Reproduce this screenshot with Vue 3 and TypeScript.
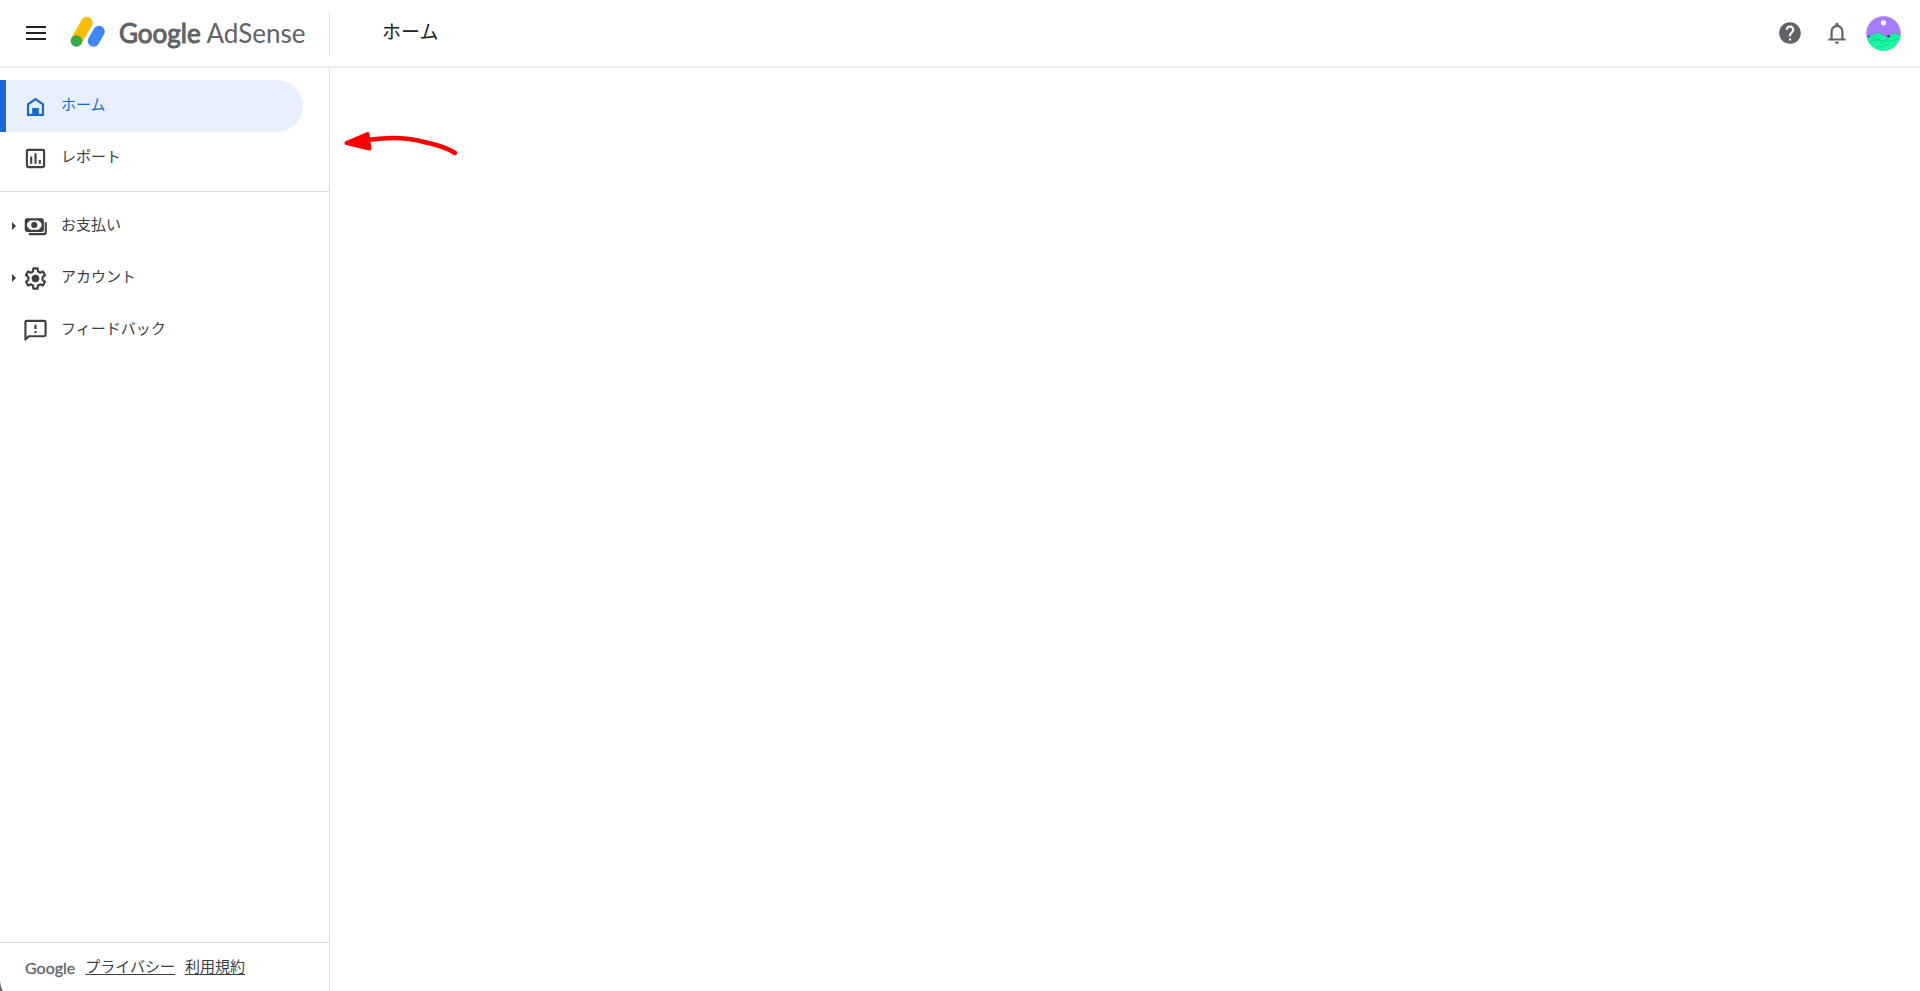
<script setup lang="ts">
type IconName = 'home' | 'report' | 'payments' | 'gear' | 'feedback'

interface NavItem {
  label: string
  icon: IconName
  active?: boolean
  expandable?: boolean
}

const groups: NavItem[][] = [
  [
    { label: 'ホーム', icon: 'home', active: true },
    { label: 'レポート', icon: 'report' },
  ],
  [
    { label: 'お支払い', icon: 'payments', expandable: true },
    { label: 'アカウント', icon: 'gear', expandable: true },
    { label: 'フィードバック', icon: 'feedback' },
  ],
]
</script>

<template>
  <div class="app">
    <header class="topbar">
      <div class="brand">
        <button class="icon-btn" type="button" aria-label="メニュー">
          <svg width="20" height="14" viewBox="0 0 20 14"><path d="M0 1h20M0 7h20M0 13h20" stroke="#202124" stroke-width="2" /></svg>
        </button>
        <a class="logo" href="#">
          <svg width="36" height="32" viewBox="0 0 36 32" fill="none" stroke-linecap="round">
            <path d="M17 5.500 6.500 23.500" stroke="#fbbc04" stroke-width="11.500" />
            <path d="M29 14.500 23.500 24" stroke="#4285f4" stroke-width="11.500" />
            <circle cx="6.500" cy="24" r="5.800" fill="#34a853" />
          </svg>
          <span class="wordmark"><span class="google">Google</span> AdSense</span>
        </a>
      </div>
      <h1 class="title">ホーム</h1>
      <div class="actions">
        <button class="icon-btn action" type="button" aria-label="ヘルプ">
          <svg width="26" height="26" viewBox="0 0 24 24" fill="#5f6368"><path d="M12 2C6.480 2 2 6.480 2 12s4.480 10 10 10 10-4.480 10-10S17.520 2 12 2zm1 17h-2v-2h2v2zm2.070-7.750-.9.920C13.450 12.900 13 13.500 13 15h-2v-.5c0-1.100.45-2.100 1.170-2.830l1.240-1.260c.37-.36.59-.86.59-1.410 0-1.100-.9-2-2-2s-2 .9-2 2H8c0-2.210 1.790-4 4-4s4 1.790 4 4c0 .88-.36 1.680-.93 2.250z" /></svg>
        </button>
        <button class="icon-btn action" type="button" aria-label="通知">
          <svg width="26" height="26" viewBox="0 0 24 24" fill="#5f6368"><path d="M12 22c1.100 0 2-.9 2-2h-4c0 1.100.9 2 2 2zm6-5v-6c0-3.070-1.630-5.640-4.500-6.320V4c0-.83-.67-1.500-1.500-1.500s-1.500.67-1.500 1.500v.68C7.640 5.360 6 7.920 6 11v6H4v2h16v-2h-2zm-2 0H8v-6c0-2.480 1.510-4.500 4-4.500s4 2.020 4 4.500v6z" /></svg>
        </button>
        <button class="icon-btn action" type="button" aria-label="アカウント">
          <svg width="35" height="35" viewBox="0 0 35 35">
            <defs><clipPath id="face"><circle cx="17.500" cy="17.500" r="17.300" /></clipPath></defs>
            <g clip-path="url(#face)">
              <rect width="35" height="35" fill="#a67cff" />
              <path d="M0 21 4 20 12 16.500 17 19 21 21 28 17 35 19V35H0Z" fill="#1df7a3" />
              <path d="M0 21 4 20 12 16.500 17 19 21 21 28 17 35 19" fill="none" stroke="#4b8f9c" stroke-width=".6" />
              <circle cx="17.500" cy="6.800" r="2.600" fill="#fff" />
              <path d="M4 23q6-5 9-3M3 27q5-4 9-3t7 1M14 28q5-4 11-3M20 24q4-4 9-4M7 22q7 1 11 5M10 31q7 1 13-3M25 25q5-2 8-2" fill="none" stroke="#12c98a" stroke-width=".7" />
              <circle cx="3" cy="20.500" r="1" fill="#303050" /><circle cx="22.500" cy="20.200" r="1.200" fill="#303050" />
            </g>
          </svg>
        </button>
      </div>
    </header>

    <div class="body">
      <aside class="sidebar">
        <nav>
          <ul v-for="(group, g) in groups" :key="g" class="group">
            <li v-for="item in group" :key="item.label">
              <a href="#" class="item" :class="{ active: item.active }">
                <span class="caret-slot"><span v-if="item.expandable" class="caret" /></span>
                <svg v-if="item.icon === 'home'" class="icon" viewBox="0 0 24 24">
                  <path d="M4.200 20.800V9.800L12 4.300l7.800 5.500v11z" fill="none" stroke="currentColor" stroke-width="2.300" /><path d="M8.500 13.500h7V21h-7z" fill="currentColor" />
                </svg>
                <svg v-else-if="item.icon === 'report'" class="icon" viewBox="0 0 24 24" fill="none" stroke="currentColor" stroke-width="2.200">
                  <rect x="3" y="3" width="18" height="18" rx="1.500" /><path d="M7.500 10v7.500M12 6.500v11M16.500 13.500v4" />
                </svg>
                <svg v-else-if="item.icon === 'payments'" class="icon" viewBox="0 0 24 24" fill="none" stroke="currentColor">
                  <rect x="2" y="4.500" width="17.500" height="12" rx="1.500" stroke-width="2.400" />
                  <path d="M2 4.500h5L2 9.500ZM19.500 4.500h-5l5 5ZM2 16.500h5l-5-5ZM19.500 16.500h-5l5-5Z" fill="currentColor" />
                  <circle cx="10.700" cy="10.500" r="3.200" fill="currentColor" stroke="none" />
                  <path d="M22.700 7.500v10.500a2 2 0 0 1-2 2H5" stroke-width="2.200" />
                </svg>
                <svg v-else-if="item.icon === 'gear'" class="icon" viewBox="0 0 24 24">
                  <path d="M9.800 1.500h4.400l.5 3.200 2 1.200 3-1.200 2.200 3.800-2.500 2v2.900l2.500 2-2.200 3.900-3-1.200-2 1.200-.5 3.200H9.800l-.5-3.200-2-1.200-3 1.200-2.200-3.900 2.500-2v-2.900l-2.500-2 2.200-3.800 3 1.200 2-1.200z" fill="none" stroke="currentColor" stroke-width="2.300" stroke-linejoin="round" /><circle cx="12" cy="12" r="4" fill="currentColor" />
                </svg>
                <svg v-else class="icon" viewBox="0 0 24 24">
                  <path d="M1.500 21.500V3.500a1.500 1.500 0 0 1 1.500-1.500h18A1.500 1.500 0 0 1 22.500 3.500v13a1.500 1.500 0 0 1-1.500 1.500H5z" fill="none" stroke="currentColor" stroke-width="2.200" stroke-linejoin="round" /><path d="M12 6v4.500M12 12.500v2.300" stroke="currentColor" stroke-width="2.200" />
                </svg>
                <span class="label">{{ item.label }}</span>
              </a>
            </li>
          </ul>
        </nav>
        <footer class="footer">
          <span class="footer-logo">Google</span>
          <a href="#">プライバシー</a>
          <a href="#">利用規約</a>
        </footer>
      </aside>
      <main class="content">
        <svg class="arrow" width="120" height="32" viewBox="0 0 120 32">
          <path d="M28 11.500Q58 7.500 81 14Q101 18 112 25" fill="none" stroke="#f00" stroke-width="4.500" stroke-linecap="round" />
          <path d="M3.500 15 24.500 6 26.500 20.500Z" fill="#f00" stroke="#f00" stroke-width="4" stroke-linejoin="round" />
        </svg>
      </main>
    </div>
    <svg class="window-corner" width="3" height="10" viewBox="0 0 3 10" aria-hidden="true"><path d="M0 0Q.5 6 3 10H0Z" fill="#666" /></svg>
  </div>
</template>

<style>
body {
  margin: 0;
}
</style>

<style scoped>
.app {
  position: relative;
  display: flex;
  flex-direction: column;
  min-height: 100vh;
  background: #fff;
  color: #3c4043;
  font-family: "Liberation Sans", "Noto Sans CJK JP", sans-serif;
  font-size: 15px;
}
.topbar {
  display: flex;
  align-items: center;
  height: 66px;
  border-bottom: 2px solid #ebebeb;
}
.brand {
  box-sizing: border-box;
  display: flex;
  align-items: center;
  width: 330px;
  height: 43px;
  padding-left: 26px;
  border-right: 1px solid #dadce0;
}
.icon-btn {
  display: flex;
  justify-content: center;
  padding: 0;
  border: 0;
  background: none;
  cursor: pointer;
}
.action {
  width: 35px;
}
.logo {
  display: flex;
  align-items: center;
  gap: 13px;
  margin-left: 24px;
  color: #5f6368;
  text-decoration: none;
}
.wordmark {
  font-family: Lato, sans-serif;
  font-size: 26px;
  line-height: 32px;
  white-space: nowrap;
}
.google {
  -webkit-text-stroke: 1px currentColor;
}
.title {
  flex: 1;
  margin: 0;
  padding-left: 52px;
  color: #202124;
  font-size: 19px;
  font-weight: 400;
  line-height: 28px;
}
.actions {
  display: flex;
  align-items: center;
  gap: 12px;
  padding-right: 19px;
}
.body {
  display: flex;
  flex: 1;
}
.sidebar {
  box-sizing: border-box;
  display: flex;
  flex-direction: column;
  width: 330px;
  border-right: 1px solid #dadce0;
}
nav {
  flex: 1;
  padding-top: 12px;
}
.group {
  margin: 0;
  padding: 0;
  list-style: none;
}
.group + .group {
  margin-top: 7px;
  padding-top: 8px;
  border-top: 1px solid #dadce0;
}
.item {
  box-sizing: border-box;
  display: flex;
  align-items: center;
  height: 52px;
  margin-right: 26px;
  color: #3c4043;
  text-decoration: none;
}
.item.active {
  border-radius: 0 26px 26px 0;
  background: #e8f0fe;
  box-shadow: inset 6px 0 #1967d2;
  color: #1967d2;
}
.caret-slot {
  width: 24px;
}
.caret {
  display: block;
  width: 0;
  margin-left: 12px;
  border: solid transparent;
  border-width: 4px 0 4px 4px;
  border-left-color: #3c4043;
}
.icon {
  width: 23px;
  height: 23px;
}
.label {
  padding-bottom: 2px;
  margin-left: 14px;
  line-height: 22px;
}
.footer {
  display: flex;
  align-items: center;
  gap: 10px;
  height: 48px;
  padding-left: 25px;
  border-top: 1px solid #dadce0;
}
.footer a {
  color: #3c4043;
  line-height: 22px;
  text-underline-offset: 2px;
}
.footer-logo {
  color: #5f6368;
  font-family: Lato, sans-serif;
  font-size: 16px;
  -webkit-text-stroke: 0.3px currentColor;
}
.content {
  flex: 1;
  padding: 60px 13px;
}
.window-corner {
  position: absolute;
  bottom: 0;
  left: 0;
}
</style>
